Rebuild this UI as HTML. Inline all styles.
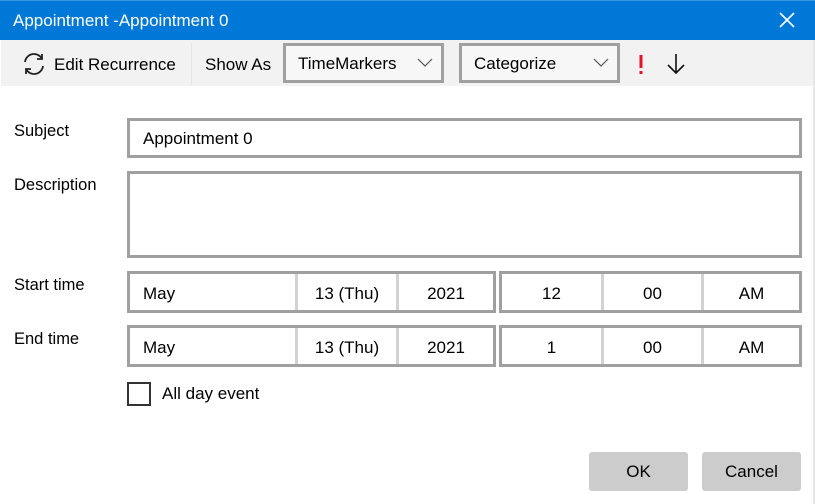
<!DOCTYPE html>
<html><head><style>
*{box-sizing:border-box;margin:0;padding:0}
body{width:815px;height:504px;overflow:hidden;background:#fff;font-family:"Liberation Sans",sans-serif;font-size:17px;color:#000;position:relative}
.a{position:absolute}
.title{left:0;top:0;width:815px;height:40px;background:#0078d7;border-top:1px solid #3c97e0;color:#fff;font-size:17px;line-height:40px;padding-left:13px}
.tb{left:1px;top:40px;width:812px;height:46px;background:#f2f2f2}
.box{border:3px solid #a0a0a0;background:#fff}
.drop{border:3px solid #a0a0a0;background:#f7f7f7;height:40px;top:43px;line-height:36px;padding-left:12px}
.lbl{left:14px;font-size:16.5px}
.grp{display:flex;height:42px;border:3px solid #a0a0a0}
.grp div{border-left:3px solid #d2d2d2;line-height:39px;text-align:center}
.grp div:first-child{border-left:none}
.btn{background:#cccccc;border-radius:3px;height:39px;top:452px;line-height:40px;text-align:center;font-size:17px}
</style></head><body>
<div class="a title">Appointment -Appointment 0</div>
<svg class="a" style="left:778px;top:11px" width="18" height="18"><path d="M2 2L16 16M16 2L2 16" stroke="#fff" stroke-width="1.6"/></svg>
<div class="a tb"></div>
<div class="a" style="left:191px;top:43px;width:1px;height:42px;background:#e4e4e4"></div>
<svg class="a" style="left:21px;top:51px" width="26" height="26" viewBox="0 0 26 26" fill="none" stroke="#222" stroke-width="1.8"><path d="M4 11A9 9 0 0 1 21 8"/><path d="M22 15A9 9 0 0 1 5 18"/><path d="M21 3V8H16"/><path d="M5 23V18H10"/></svg>
<div class="a" style="left:54px;top:55px;font-size:17px">Edit Recurrence</div>
<div class="a" style="left:205px;top:55px;font-size:17px">Show As</div>
<div class="a drop" style="left:283px;width:161px;font-size:17px">TimeMarkers</div>
<svg class="a" style="left:417px;top:58px" width="16" height="10"><path d="M1 1L8 8L15 1" stroke="#555" fill="none" stroke-width="1.2"/></svg>
<div class="a drop" style="left:459px;width:161px;font-size:17px">Categorize</div>
<svg class="a" style="left:593px;top:58px" width="16" height="10"><path d="M1 1L8 8L15 1" stroke="#555" fill="none" stroke-width="1.2"/></svg>
<svg class="a" style="left:637px;top:54px" width="8" height="22"><path d="M4 1V14" stroke="#e81123" stroke-width="3"/><rect x="2.5" y="17" width="3" height="3" fill="#e81123"/></svg>
<svg class="a" style="left:665px;top:52px" width="22" height="24"><path d="M11 2V21M3 13L11 21L19 13" stroke="#111" fill="none" stroke-width="1.6"/></svg>

<div class="a lbl" style="top:122px">Subject</div>
<div class="a box" style="left:127px;top:118px;width:675px;height:40px;line-height:36px;padding-left:13px">Appointment 0</div>
<div class="a lbl" style="top:176px">Description</div>
<div class="a box" style="left:127px;top:171px;width:675px;height:87px"></div>

<div class="a lbl" style="top:276px">Start time</div>
<div class="a grp" style="left:127px;top:271px;width:369px"><div style="width:165px;text-align:left;padding-left:13px">May</div><div style="width:101px">13 (Thu)</div><div style="flex:1">2021</div></div>
<div class="a grp" style="left:499px;top:271px;width:303px"><div style="width:99px">12</div><div style="width:100px">00</div><div style="flex:1">AM</div></div>

<div class="a lbl" style="top:330px">End time</div>
<div class="a grp" style="left:127px;top:325px;width:369px"><div style="width:165px;text-align:left;padding-left:13px">May</div><div style="width:101px">13 (Thu)</div><div style="flex:1">2021</div></div>
<div class="a grp" style="left:499px;top:325px;width:303px"><div style="width:99px">1</div><div style="width:100px">00</div><div style="flex:1">AM</div></div>

<div class="a" style="left:127px;top:382px;width:24px;height:24px;border:2px solid #333"></div>
<div class="a" style="left:162px;top:384px;font-size:17px">All day event</div>

<div class="a btn" style="left:589px;width:99px">OK</div>
<div class="a btn" style="left:702px;width:99px">Cancel</div>
<div class="a" style="left:813px;top:40px;width:2px;height:464px;background:#e6e6e6"></div>
</body></html>
